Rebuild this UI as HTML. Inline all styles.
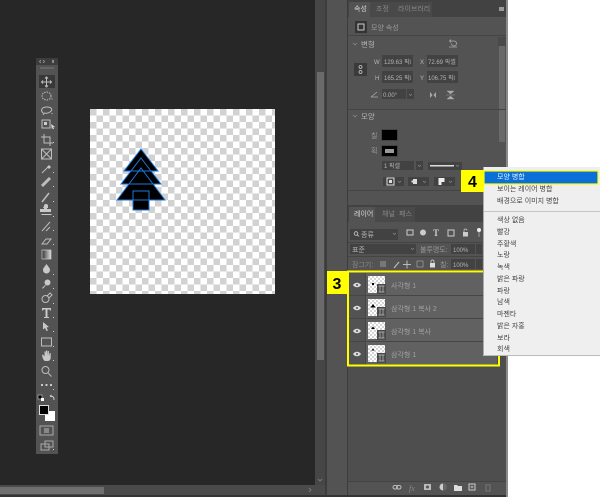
<!DOCTYPE html>
<html><head><meta charset="utf-8">
<style>
html,body{margin:0;padding:0;background:#fff;width:600px;height:497px;overflow:hidden}
svg{display:block;position:absolute;left:0;top:0;filter:blur(.35px)}
text{font-family:"Liberation Sans","Noto Sans CJK KR",sans-serif;font-size:7px;fill:#b4b4b4}
.m text{fill:#444;font-size:7px}
.f{fill:#424242}
.i{fill:none;stroke:#bdbdbd;stroke-width:1}
.s{fill:#c8c8c8}
.sep{fill:#444}
</style></head><body>
<svg width="600" height="497" viewBox="0 0 600 497" xmlns="http://www.w3.org/2000/svg">
<defs>
<pattern id="ck" x="90" y="109" width="13" height="13" patternUnits="userSpaceOnUse">
<rect width="13" height="13" fill="#fff"/><rect width="6.500" height="6.500" fill="#d2d2d2"/><rect x="6.500" y="6.500" width="6.500" height="6.500" fill="#d2d2d2"/>
</pattern>
<pattern id="ck2" x="0" y="0" width="4" height="4" patternUnits="userSpaceOnUse">
<rect width="4" height="4" fill="#fff"/><rect width="2" height="2" fill="#d6d6d6"/><rect x="2" y="2" width="2" height="2" fill="#d6d6d6"/>
</pattern>
<linearGradient id="gr"><stop offset="0" stop-color="#333"/><stop offset="1" stop-color="#ddd"/></linearGradient>
</defs>
<!-- base -->
<rect width="600" height="497" fill="#fff"/>
<rect width="508" height="497" fill="#4a4a4a"/>
<rect width="315" height="485" fill="#272727"/>
<!-- bottom scrollbar -->
<rect y="485" width="325" height="10" fill="#4a4a4a"/>
<rect y="487" width="104" height="7" fill="#6f6f6f"/>
<path d="M309 488l2 2-2 2" fill="none" stroke="#777"/>
<rect y="495" width="508" height="2" fill="#333"/>
<!-- vertical scrollbar -->
<rect x="315" y="0" width="10" height="485" fill="#464646"/>
<rect x="317" y="72" width="7" height="288" fill="#6a6a6a"/>
<path d="M318 479l2 2 2-2" fill="none" stroke="#777"/>
<rect x="325" y="0" width="2" height="495" fill="#3c3c3c"/>
<rect x="327" y="0" width="20" height="495" fill="#535353"/>
<rect x="347" y="0" width="1" height="495" fill="#3c3c3c"/>
<rect x="506" y="0" width="2" height="497" fill="#8a8a8a"/>

<!-- canvas -->
<rect x="90" y="109" width="185" height="185" fill="url(#ck)"/>
<g fill="#000">
<path d="M141 149L158 171H124Z"/>
<path d="M141 158L161 184H121Z"/>
<path d="M141 168L165 200H117Z"/>
<rect x="133" y="191" width="16" height="19"/>
</g>
<g fill="none" stroke="#1c78dc" stroke-width="1">
<path d="M141 149L158 171H124Z"/>
<path d="M141 158L161 184H121Z"/>
<path d="M141 168L165 200H117Z"/>
<rect x="133" y="191" width="16" height="19"/>
</g>

<!-- toolbar -->
<rect x="36" y="58" width="22" height="396" fill="#535353"/>
<rect x="36" y="58" width="22" height="7" fill="#3d3d3d"/>
<path d="M41 60l-1.500 1.500 1.500 1.500M43 60l1.500 1.500-1.500 1.500M52 60l1.500 1.500-1.500 1.500M54 60l-1.500 1.500 1.500 1.500" fill="none" stroke="#aaa" stroke-width=".7"/>
<rect x="40" y="67" width="14" height="2" fill="#666"/>
<rect x="39" y="75" width="16" height="13" fill="#383838"/>
<g class="i">
<path d="M46.500 77v10M41.500 82h10M45 78.500l1.500-1.500 1.500 1.500M45 85.500l1.500 1.500 1.500-1.500M43 80.500l-1.500 1.500 1.500 1.500M50 80.500l1.500 1.500-1.500 1.500"/>
<ellipse cx="46.500" cy="96" rx="4.500" ry="4" stroke-dasharray="1.500 1"/>
<path d="M43 113c-3-3-1-6 4-6 5 0 6 3 3 5-2 1.500-5 1.500-6 1l-1 2"/>
<rect x="42" y="120" width="8" height="8"/>
<path d="M44 134v9h9M41 137h9v9"/>
<rect x="41.500" y="149" width="10" height="10"/><path d="M41.500 149l10 10M51.500 149l-10 10"/>
<path d="M42 173l6-6"/>
<path d="M42 186l8-8" stroke-width="3"/>
<path d="M42 202l7-9" stroke-width="1.500"/>
<path d="M42 231l8-9M46 231l4-4"/>
<path d="M42 244l4-5h5l-4 5z"/>
<circle cx="45.500" cy="299" r="3.500"/>
<path d="M47 296l3-3 2 2-3 3"/>
<rect x="41.500" y="338" width="10" height="8"/>
<circle cx="45.500" cy="370" r="3.500"/><path d="M48 373l3.500 3.500"/>
<rect x="40" y="426" width="13" height="9" stroke="#aaa"/>
<rect x="41" y="444" width="8" height="6" stroke="#aaa"/>
<rect x="45" y="441" width="8" height="6" stroke="#aaa"/>
</g>
<g class="s">
<path d="M49 165l2 2-2 2-2-2z"/>
<path d="M44.500 207a2 2 0 1 1 4 0v2h-1v1h4v3h-11v-3h4v-1h-1z" transform="translate(-.5 -1)"/>
<path d="M41.500 214h10v1h-10z"/>
<path d="M46.500 264c2 3 3.500 4 3.500 6a3.500 3.500 0 0 1-7 0c0-2 1.500-3 3.500-6z"/>
<circle cx="47.500" cy="282.500" r="3"/><path d="M45 285l-3 3 .7.7 3-3z"/>
<path d="M42 308h9v2.500h-1l-.5-1h-2v7.500h1.500v1h-5v-1h1.500v-7.500h-2l-.5 1h-1z"/>
<path d="M43 322l6 5-2.500.5 1.500 3-1.500.5-1.500-3-2 1.500z"/>
<path d="M42 355l1-.5 1.500 2v-5h1.200v4l.3-5h1.200v5l.5-4.500h1.200v5l.8-3h1v4.500c0 2-1 3.500-3 3.500h-2c-1.500 0-2-1-3-3z"/>
<rect x="41" y="384" width="2" height="2"/><rect x="45.500" y="384" width="2" height="2"/><rect x="50" y="384" width="2" height="2"/>
</g>
<rect x="42" y="250" width="9" height="9" fill="url(#gr)" stroke="#ccc" stroke-width=".7"/>
<path d="M51 124l4 3-2 .5-1 2z" fill="#ddd"/>
<rect x="44" y="122" width="3" height="3" fill="#ccc"/>
<g fill="#ccc"><path d="M51.500 98.500h1v1h-1zM51.500 113h1v1h-1zM53 128h1v1h-1zM53 142h1v1h-1zM53 172h1v1h-1zM53 186h1v1h-1zM53 201h1v1h-1zM53 216h1v1h-1zM53 230h1v1h-1zM53 244h1v1h-1zM53 274h1v1h-1zM53 288h1v1h-1zM53 303h1v1h-1zM53 317h1v1h-1zM53 331h1v1h-1zM53 346h1v1h-1zM53 360h1v1h-1zM53 389h1v1h-1zM53 449h1v1h-1z"/></g>
<rect x="38" y="395" width="4" height="4" fill="#000" stroke="#ccc" stroke-width=".6"/>
<rect x="41" y="398" width="3" height="3" fill="#fff"/>
<path d="M50 396c3 0 4 1 4 4M50 396l1.500-1M50 396l1.500 1" fill="none" stroke="#ccc"/>
<rect x="45" y="411" width="10" height="10" fill="#fff"/>
<rect x="39.500" y="405.500" width="9" height="9" fill="#000" stroke="#ddd"/>
<rect x="44" y="428" width="5" height="5" fill="#888"/>

<!-- properties panel -->
<rect x="348" y="0" width="158" height="205" fill="#535353"/>
<rect x="348" y="0" width="158" height="17" fill="#424242"/>
<rect x="349" y="2" width="21" height="15" fill="#535353"/>
<rect x="370" y="2" width="24" height="15" fill="#494949"/>
<rect x="394" y="2" width="38" height="15" fill="#494949"/>
<rect x="499" y="7" width="5" height="4" fill="#999"/>
<text x="354" y="11" style="fill:#d4d4d4">속성</text>
<text x="376" y="11" style="fill:#888">조정</text>
<text x="398" y="11" style="fill:#888">라이브러리</text>
<rect x="355" y="21" width="12" height="12" fill="#333"/>
<rect x="358" y="24" width="6" height="6" fill="none" stroke="#ccc"/>
<text x="371" y="30" style="fill:#999">모양 속성</text>
<rect x="348" y="35" width="158" height="1" class="sep"/>
<path d="M353 43l2 2 2-2" fill="none" stroke="#888" stroke-width=".8"/>
<text x="361" y="47" style="font-size:7.500px">변형</text>
<path d="M450 41h4a2.500 2.500 0 1 1-2.500 2.500M451 39.500l-1.500 1.500 1.500 1.500M449 47h8" fill="none" stroke="#aaa" stroke-width=".8"/>
<rect x="498" y="37" width="8" height="9" fill="#4a4a4a"/>
<rect x="499" y="46" width="6" height="96" fill="#696969"/>
<rect x="354" y="63" width="13" height="13" fill="#3a3a3a"/>
<circle cx="360.500" cy="67" r="1.500" fill="none" stroke="#ccc" stroke-width=".8"/><circle cx="360.500" cy="72" r="1.500" fill="none" stroke="#ccc" stroke-width=".8"/>
<text x="374" y="64" style="font-size:6px">W</text>
<text x="375" y="80" style="font-size:6px">H</text>
<text x="420" y="64" style="font-size:6px">X</text>
<text x="420" y="80" style="font-size:6px">Y</text>
<rect x="382" y="55" width="31" height="12" class="f"/>
<rect x="427" y="55" width="31" height="12" class="f"/>
<rect x="382" y="71" width="31" height="12" class="f"/>
<rect x="427" y="71" width="31" height="12" class="f"/>
<text x="384" y="64" style="font-size:6px">129.63 픽l</text>
<text x="428" y="64" style="font-size:6px">72.69 픽셀</text>
<text x="384" y="80" style="font-size:6px">165.25 픽l</text>
<text x="428" y="80" style="font-size:6px">106.75 픽l</text>
<path d="M371 97l6-5M371 97h7" fill="none" stroke="#aaa" stroke-width=".8"/>
<rect x="382" y="89" width="24" height="10" class="f"/>
<rect x="407" y="89" width="7" height="10" class="f"/>
<text x="383" y="97" style="font-size:6px">0.00°</text>
<path d="M409 94l1.500 1.500 1.500-1.500" fill="none" stroke="#888" stroke-width=".7"/>
<path d="M430 92v6l2.500-3zM436 92v6l-2.500-3z" fill="#aaa"/>
<path d="M447 91h7l-3.500 3zM447 99h7l-3.500-3zM446 95h9" fill="#aaa" stroke="#aaa" stroke-width=".4"/>
<rect x="348" y="109" width="158" height="1" class="sep"/>
<path d="M353 115l2 2 2-2" fill="none" stroke="#888" stroke-width=".8"/>
<text x="361" y="119" style="font-size:7.500px">모양</text>
<text x="371" y="138" style="fill:#999">칠</text>
<text x="371" y="153" style="fill:#999">획</text>
<rect x="381.500" y="129.500" width="16" height="11" fill="#000" stroke="#444"/>
<rect x="381.500" y="145.500" width="16" height="11" fill="#000" stroke="#444"/>
<rect x="385" y="149" width="9" height="4" fill="#999"/>
<rect x="382" y="161" width="32" height="9" class="f"/>
<rect x="416" y="161" width="7" height="9" class="f"/>
<text x="384" y="168" style="font-size:6px">1 픽셀</text>
<path d="M418 165l1.500 1.500 1.500-1.500" fill="none" stroke="#888" stroke-width=".7"/>
<rect x="428" y="162" width="34" height="8" class="f"/>
<rect x="430" y="165" width="24" height="1.500" fill="#ddd"/>
<path d="M456 165l1.500 1.500 1.500-1.500" fill="none" stroke="#888" stroke-width=".7"/>
<rect x="383" y="177" width="21" height="9" class="f"/>
<rect x="408" y="177" width="21" height="9" class="f"/>
<rect x="434" y="177" width="21" height="9" class="f"/>
<rect x="387" y="178" width="7" height="7" fill="none" stroke="#ddd"/><rect x="389" y="180" width="3" height="3" fill="#ddd"/>
<path d="M413 179h4v5h-4v-1.500h-1.500v-2h1.500z" fill="#ddd"/>
<path d="M438.500 178h6v4h-3v3h-3z" fill="#eee"/>
<path d="M398 181l1.500 1.500 1.500-1.500M423 181l1.500 1.500 1.500-1.500M449 181l1.500 1.500 1.500-1.500" fill="none" stroke="#888" stroke-width=".7"/>
<rect x="348" y="190" width="158" height="1" class="sep"/>

<!-- layers panel -->
<rect x="348" y="205" width="158" height="290" fill="#4e4e4e"/>
<rect x="348" y="205" width="158" height="17" fill="#424242"/>
<rect x="349" y="207" width="26" height="15" fill="#535353"/>
<rect x="375" y="207" width="20" height="15" fill="#494949"/>
<rect x="395" y="207" width="20" height="15" fill="#494949"/>
<text x="354" y="216" style="fill:#d4d4d4">레이어</text>
<text x="382" y="216" style="fill:#888">채널</text>
<text x="399" y="216" style="fill:#888">패스</text>
<rect x="348" y="222" width="158" height="49" fill="#535353"/>
<rect x="350" y="229" width="48" height="11" class="f"/>
<circle cx="356" cy="233.500" r="1.800" fill="none" stroke="#ccc" stroke-width=".8"/><path d="M357.500 235l1.500 1.500" stroke="#ccc" stroke-width=".8"/>
<text x="361" y="237">종류</text>
<path d="M393 233l1.500 1.500 1.500-1.500" fill="none" stroke="#888" stroke-width=".7"/>
<rect x="407" y="230" width="6" height="5" fill="none" stroke="#ccc"/>
<circle cx="423" cy="232.500" r="3" fill="#ccc"/>
<text x="433" y="236" style="font-family:'Liberation Serif',serif;font-size:9px;font-weight:bold;fill:#ccc">T</text>
<rect x="448" y="230" width="6" height="6" fill="none" stroke="#ccc"/>
<rect x="463" y="232" width="5" height="4.500" fill="#ccc"/><path d="M464 232v-1.500a1.500 1.500 0 0 1 3 0" fill="none" stroke="#ccc" stroke-width=".7"/>
<circle cx="479" cy="230" r="2" fill="#eee"/><rect x="478" y="232" width="2" height="5" fill="#777"/>
<rect x="348" y="242" width="158" height="1" class="sep"/>
<rect x="350" y="244" width="66" height="10" class="f"/>
<text x="352" y="252">표준</text>
<path d="M411 248l1.500 1.500 1.500-1.500" fill="none" stroke="#888" stroke-width=".7"/>
<text x="420" y="252" style="fill:#999">불투명도:</text>
<rect x="451" y="244" width="24" height="10" class="f"/>
<text x="453" y="252" style="font-size:6px">100%</text>
<rect x="476" y="244" width="6" height="10" class="f"/>
<rect x="348" y="256" width="158" height="1" class="sep"/>
<text x="352" y="267" style="fill:#888">잠그기:</text>
<rect x="380" y="261" width="6" height="6" fill="#777"/>
<path d="M394 268l5-6" stroke="#bbb" stroke-width="1.200"/>
<path d="M407 260.500v8M403 264.500h8" stroke="#bbb"/>
<rect x="417" y="261" width="6" height="6" fill="none" stroke="#999" stroke-width=".8"/>
<rect x="430" y="263" width="5" height="4.500" fill="#ddd"/><path d="M431 263v-1.500a1.500 1.500 0 0 1 3 0v1.500" fill="none" stroke="#ddd" stroke-width=".7"/>
<text x="440" y="267" style="fill:#999">칠:</text>
<rect x="451" y="259" width="24" height="10" class="f"/>
<text x="453" y="267" style="font-size:6px">100%</text>
<rect x="476" y="259" width="6" height="10" class="f"/>

<!-- layers -->
<rect x="349" y="273" width="148" height="92" fill="#464646"/>
<g>
<rect x="349" y="273" width="16" height="22" fill="#535353"/><rect x="366" y="273" width="131" height="22" fill="#616161"/>
<rect x="349" y="296" width="16" height="22" fill="#535353"/><rect x="366" y="296" width="131" height="22" fill="#616161"/>
<rect x="349" y="319" width="16" height="22" fill="#535353"/><rect x="366" y="319" width="131" height="22" fill="#616161"/>
<rect x="349" y="342" width="16" height="23" fill="#535353"/><rect x="366" y="342" width="131" height="23" fill="#616161"/>
</g>
<g fill="#ddd">
<path d="M353 285c2-3 6-3 8 0-2 3-6 3-8 0z"/><path d="M353 308c2-3 6-3 8 0-2 3-6 3-8 0z"/><path d="M353 331c2-3 6-3 8 0-2 3-6 3-8 0z"/><path d="M353 354c2-3 6-3 8 0-2 3-6 3-8 0z"/>
</g>
<g fill="#535353"><circle cx="357" cy="285" r="1"/><circle cx="357" cy="308" r="1"/><circle cx="357" cy="331" r="1"/><circle cx="357" cy="354" r="1"/></g>
<g>
<rect x="368" y="276" width="17" height="17" fill="url(#ck2)"/><rect x="368" y="299" width="17" height="17" fill="url(#ck2)"/><rect x="368" y="322" width="17" height="17" fill="url(#ck2)"/><rect x="368" y="345" width="17" height="17" fill="url(#ck2)"/>
<rect x="372" y="283" width="2" height="2" fill="#000"/>
<path d="M373 304l2.500 3.500h-5z" fill="#000"/>
<path d="M373 326.500l2 2.500h-4z" fill="#000"/>
<path d="M373 348.500l1.500 2h-3z" fill="#000"/>
</g>
<g fill="#4a4a4a">
<rect x="377" y="284" width="9" height="10"/><rect x="377" y="307" width="9" height="10"/><rect x="377" y="330" width="9" height="10"/><rect x="377" y="353" width="9" height="10"/>
</g>
<g fill="none" stroke="#c0c0c0" stroke-width=".7">
<path d="M378.500 286h6M378.500 292h6M380 286v6M383 286v6"/>
<path d="M378.500 309h6M378.500 315h6M380 309v6M383 309v6"/>
<path d="M378.500 332h6M378.500 338h6M380 332v6M383 332v6"/>
<path d="M378.500 355h6M378.500 361h6M380 355v6M383 355v6"/>
</g>
<text x="391" y="288" style="fill:#a0a0a0">사각형 1</text>
<text x="391" y="311" style="fill:#a0a0a0">삼각형 1 복사 2</text>
<text x="391" y="334" style="fill:#a0a0a0">삼각형 1 복사</text>
<text x="391" y="357" style="fill:#a0a0a0">삼각형 1</text>
<rect x="348" y="271.500" width="151" height="94" fill="none" stroke="#ff0" stroke-width="2"/>
<rect x="327" y="271" width="20" height="23" fill="#ff0"/>
<text x="337" y="289" text-anchor="middle" style="font-size:16px;font-weight:bold;fill:#000">3</text>

<!-- layers footer -->
<rect x="348" y="481" width="158" height="1" class="sep"/>
<rect x="348" y="482" width="158" height="13" fill="#535353"/>
<g fill="none" stroke="#bbb" stroke-width="1">
<rect x="393" y="485.500" width="4.500" height="3.500" rx="1.700"/><rect x="396.500" y="485.500" width="4.500" height="3.500" rx="1.700"/>
</g>
<text x="409" y="491" style="font-family:'Liberation Serif',serif;font-style:italic;font-size:8px;fill:#888">fx</text>
<rect x="424" y="484" width="7" height="6" fill="#bbb"/><circle cx="427.500" cy="487" r="1.500" fill="#555"/>
<circle cx="443" cy="487" r="3.500" fill="#ccc"/><path d="M443 483.500a3.500 3.500 0 0 1 0 7z" fill="#666"/>
<path d="M454 485h3l1 1h4v5h-8z" fill="#ddd"/>
<rect x="469" y="484" width="6" height="6" fill="none" stroke="#ccc"/><path d="M472 485.500v3M470.500 487h3" stroke="#ccc" stroke-width=".7"/>
<path d="M485 485h6M486 486v5h4v-5" fill="none" stroke="#777"/>

<!-- context menu -->
<rect x="483" y="167" width="117" height="188.500" fill="#efefef"/>
<rect x="483" y="167" width="1" height="188" fill="#aaa"/>
<rect x="483" y="355" width="117" height="1" fill="#bbb"/>
<rect x="461" y="170" width="23" height="22" fill="#ff0"/>
<text x="472.500" y="187" text-anchor="middle" style="font-size:16px;font-weight:bold;fill:#000">4</text>
<rect x="484" y="171" width="114" height="13" fill="#0a6fd6" stroke="#ff0" stroke-width="1.200"/>
<rect x="484" y="211" width="116" height="1" fill="#c4c4c4"/>
<g class="m">
<text x="497" y="179" style="fill:#e8f2ff">모양 병합</text>
<text x="497" y="191">보이는 레이어 병합</text>
<text x="497" y="203">배경으로 이미지 병합</text>
<text x="497" y="222">색상 없음</text>
<text x="497" y="234">빨강</text>
<text x="497" y="246">주황색</text>
<text x="497" y="257">노랑</text>
<text x="497" y="269">녹색</text>
<text x="497" y="281">밝은 파랑</text>
<text x="497" y="293">파랑</text>
<text x="497" y="304">남색</text>
<text x="497" y="316">마젠타</text>
<text x="497" y="328">밝은 자홍</text>
<text x="497" y="340">보라</text>
<text x="497" y="351">회색</text>
</g>
</svg>
</body></html>
